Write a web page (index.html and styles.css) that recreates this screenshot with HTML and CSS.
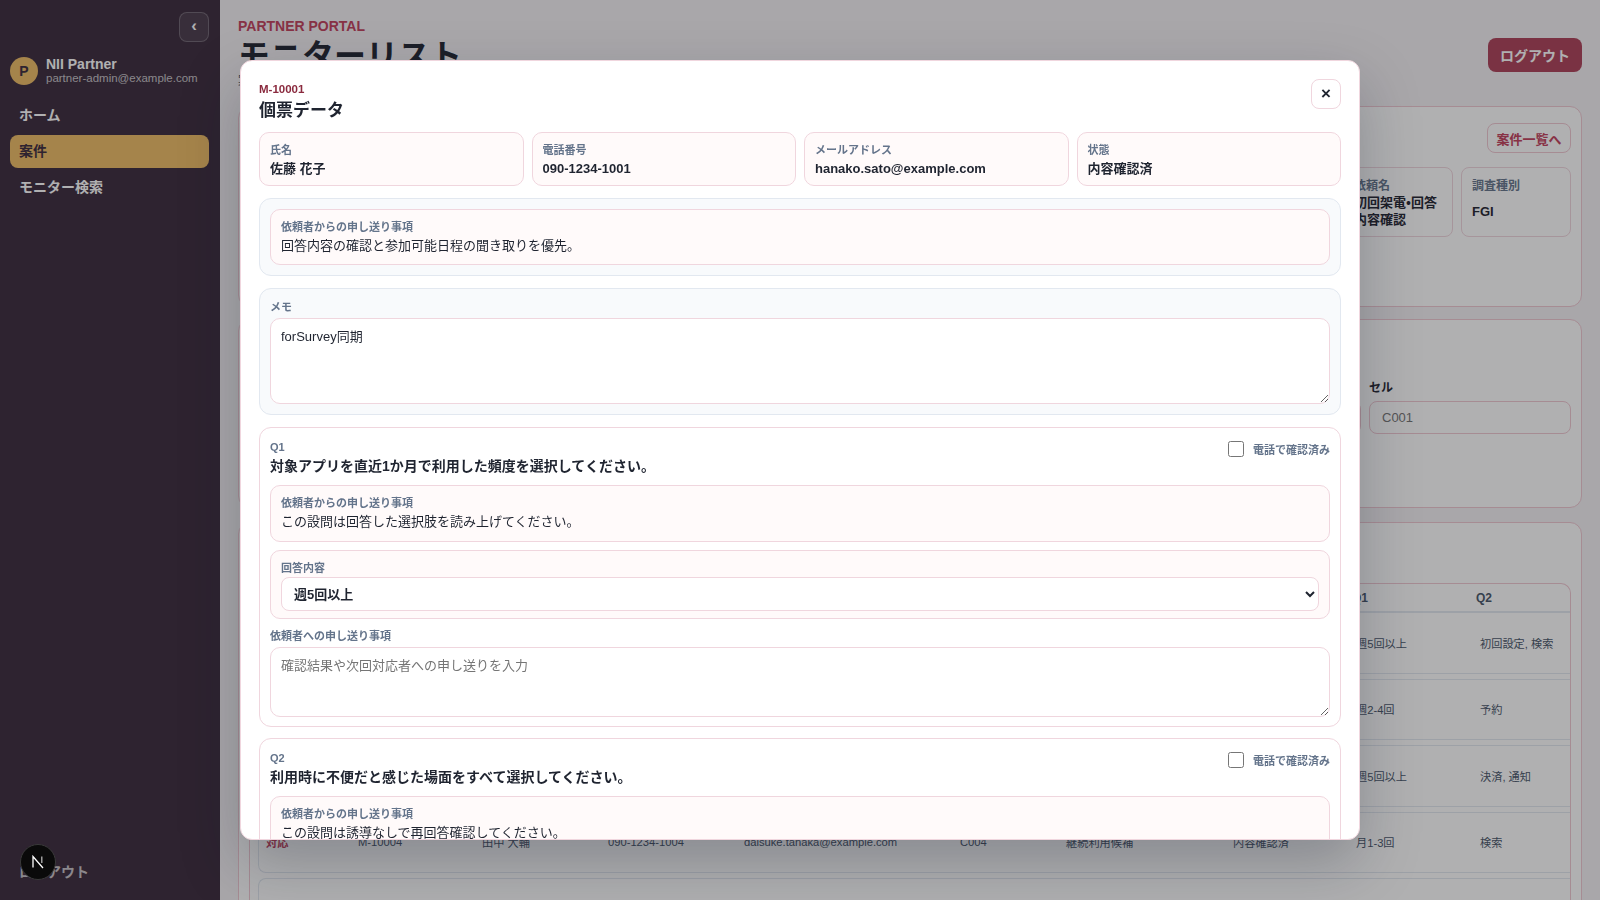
FILE: index.html
```html
<!DOCTYPE html>
<html lang="ja">
<head>
    <meta charset="UTF-8">
    <meta name="viewport" content="width=device-width, initial-scale=1.0">
    <title>モニターリスト</title>
    <link rel="stylesheet" href="styles.css">
</head>
<body>
    <aside class="sidebar">
        <button class="collapse" type="button">‹</button>
        <div class="user">
            <div class="avatar">P</div>
            <div>
                <div class="user-name">NII Partner</div>
                <div class="user-mail">partner-admin@example.com</div>
            </div>
        </div>
        <nav class="nav">
            <a class="nav-item">ホーム</a>
            <a class="nav-item active">案件</a>
            <a class="nav-item">モニター検索</a>
        </nav>
        <a class="nav-item sidebar-logout">ログアウト</a>
    </aside>

    <main class="main">
        <header class="page-head">
            <div class="page-title">
                <div class="eyebrow">PARTNER PORTAL</div>
                <h1>モニターリスト</h1>
                <p class="page-sub">案件に紐づくモニターを確認します。</p>
            </div>
            <button class="logout" type="button">ログアウト</button>
        </header>

        <section class="card case-card">
            <div class="card-head">
                <h2>案件情報</h2>
                <button class="ghost" type="button">案件一覧へ</button>
            </div>
            <div class="case-grid">
                <div class="case-cell"><span>案件ID</span><strong>P-2001</strong></div>
                <div class="case-cell"><span>案件名</span><strong>アプリ利用実態調査</strong></div>
                <div class="case-cell"><span>クライアント</span><strong>NII Partner</strong></div>
                <div class="case-cell"><span>依頼名</span><strong>初回架電・回答内容確認</strong></div>
                <div class="case-cell"><span>調査種別</span><strong>FGI</strong></div>
            </div>
        </section>

        <section class="card filter-card">
            <h2>絞り込み</h2>
            <div class="filter-grid">
                <label class="field">ID<input placeholder="M-10001"></label>
                <label class="field">氏名<input placeholder="佐藤 花子"></label>
                <label class="field">電話番号<input placeholder="090-1234-1001"></label>
                <label class="field">メール<input placeholder="hanako.sato@example.com"></label>
                <label class="field">状態<input placeholder="内容確認済"></label>
                <label class="field">セル<input placeholder="C001"></label>
            </div>
        </section>

        <section class="card list-card">
            <h2>モニター一覧</h2>
            <div class="table">
                <div class="table-row table-header">
                    <div>操作</div><div>ID</div><div>氏名</div><div>電話番号</div><div>メール</div><div>セル</div><div>属性</div><div>状態</div><div>Q1</div><div>Q2</div>
                </div>
                <div class="table-row">
                    <div class="act">対応</div><div>M-10001</div><div>佐藤 花子</div><div>090-1234-1001</div><div>hanako.sato@example.com</div><div>C001</div><div>継続利用候補</div><div>内容確認済</div><div>週5回以上</div><div>初回設定, 検索</div>
                </div>
                <div class="table-row">
                    <div class="act">対応</div><div>M-10002</div><div>鈴木 一郎</div><div>090-1234-1002</div><div>ichiro.suzuki@example.com</div><div>C002</div><div>新規利用</div><div>内容確認済</div><div>週2-4回</div><div>予約</div>
                </div>
                <div class="table-row">
                    <div class="act">対応</div><div>M-10003</div><div>高橋 美咲</div><div>090-1234-1003</div><div>misaki.takahashi@example.com</div><div>C003</div><div>継続利用候補</div><div>内容確認済</div><div>週5回以上</div><div>決済, 通知</div>
                </div>
                <div class="table-row">
                    <div class="act">対応</div><div>M-10004</div><div>田中 大輔</div><div>090-1234-1004</div><div>daisuke.tanaka@example.com</div><div>C004</div><div>継続利用候補</div><div>内容確認済</div><div>月1-3回</div><div>検索</div>
                </div>
                <div class="table-row"></div>
            </div>
        </section>
    </main>

    <div class="overlay">
        <div class="modal">
            <div class="modal-head">
                <div>
                    <div class="modal-id">M-10001</div>
                    <div class="modal-title">個票データ</div>
                </div>
                <button class="close" type="button">×</button>
            </div>

            <div class="info-grid">
                <div class="box"><div class="label">氏名</div><div class="value">佐藤 花子</div></div>
                <div class="box"><div class="label">電話番号</div><div class="value">090-1234-1001</div></div>
                <div class="box"><div class="label">メールアドレス</div><div class="value">hanako.sato@example.com</div></div>
                <div class="box"><div class="label">状態</div><div class="value">内容確認済</div></div>
            </div>

            <section class="panel">
                <div class="box note">
                    <div class="label">依頼者からの申し送り事項</div>
                    <div class="note-text">回答内容の確認と参加可能日程の聞き取りを優先。</div>
                </div>
            </section>

            <section class="panel memo">
                <label class="label" for="memo">メモ</label>
                <textarea id="memo" class="memo-input">forSurvey同期</textarea>
            </section>

            <section class="question">
                <div class="q-head">
                    <div>
                        <div class="label">Q1</div>
                        <div class="q-title">対象アプリを直近1か月で利用した頻度を選択してください。</div>
                    </div>
                    <label class="check"><input type="checkbox">電話で確認済み</label>
                </div>
                <div class="box note">
                    <div class="label">依頼者からの申し送り事項</div>
                    <div class="note-text">この設問は回答した選択肢を読み上げてください。</div>
                </div>
                <div class="box answer">
                    <label class="label">回答内容</label>
                    <select class="answer-select">
                        <option>週5回以上</option>
                        <option>週2-4回</option>
                        <option>月1-3回</option>
                    </select>
                </div>
                <label class="label handover-label">依頼者への申し送り事項</label>
                <textarea class="handover" placeholder="確認結果や次回対応者への申し送りを入力"></textarea>
            </section>

            <section class="question">
                <div class="q-head">
                    <div>
                        <div class="label">Q2</div>
                        <div class="q-title">利用時に不便だと感じた場面をすべて選択してください。</div>
                    </div>
                    <label class="check"><input type="checkbox">電話で確認済み</label>
                </div>
                <div class="box note">
                    <div class="label">依頼者からの申し送り事項</div>
                    <div class="note-text">この設問は誘導なしで再回答確認してください。</div>
                </div>
            </section>
        </div>
    </div>

    <div class="dev-badge">
        <svg width="14" height="14" viewBox="0 0 14 14" fill="none">
            <path d="M2 12.5V1.5L12 13" stroke="#fff" stroke-width="1.3"/>
            <path d="M10.8 1.5V8" stroke="#fff" stroke-width="1.3" opacity="0.7"/>
        </svg>
    </div>
</body>
</html>
```

FILE: styles.css
```css
* {
    box-sizing: border-box;
}

body {
    margin: 0;
    height: 900px;
    display: flex;
    overflow: hidden;
    background-color: #f4f1f4;
    color: #1f2430;
    font-family: "Liberation Sans", "DejaVu Sans", "Noto Sans CJK SC", sans-serif;
}

button, input, select, textarea {
    font-family: inherit;
}

/* sidebar */
.sidebar {
    width: 220px;
    height: 900px;
    flex-shrink: 0;
    display: flex;
    flex-direction: column;
    padding: 12px 11px 11px 10px;
    background-color: #3a2a3c;
    color: #fff;
}

.collapse {
    align-self: flex-end;
    width: 30px;
    height: 30px;
    padding: 0 0 3px;
    border: 1px solid rgba(255,255,255,0.22);
    border-radius: 8px;
    background-color: rgba(255,255,255,0.08);
    color: #fff;
    font-size: 17px;
    font-weight: bold;
}

.user {
    display: flex;
    align-items: center;
    gap: 8px;
    margin-top: 14px;
}

.avatar {
    display: flex;
    align-items: center;
    justify-content: center;
    width: 28px;
    height: 28px;
    border-radius: 50%;
    background-color: #eebc64;
    color: #3a2a3c;
    font-size: 14px;
    font-weight: bold;
}

.user-name {
    font-size: 14px;
    font-weight: bold;
    line-height: 16px;
}

.user-mail {
    font-size: 11.5px;
    line-height: 13px;
    color: rgba(255,255,255,0.72);
}

.nav {
    display: flex;
    flex-direction: column;
    gap: 3px;
    margin-top: 14px;
}

.nav-item {
    display: block;
    height: 33px;
    padding: 0 9px;
    border-radius: 8px;
    font-size: 14px;
    font-weight: bold;
    line-height: 33px;
    color: #fff;
}

.nav-item.active {
    background-color: #eebc64;
    color: #3a2a3c;
}

.sidebar-logout {
    margin-top: auto;
    color: rgba(255,255,255,0.72);
}

/* page behind the dialog */
.main {
    flex: 1;
    min-width: 0;
    padding: 18px 18px 0;
}

.page-head {
    display: flex;
    justify-content: space-between;
    align-items: center;
    height: 76px;
    margin-bottom: 12px;
}

.page-title {
    padding-bottom: 6px;
}

.eyebrow {
    font-size: 14px;
    line-height: 16px;
    font-weight: bold;
    color: #c2405c;
}

h1 {
    margin: 0;
    font-size: 32px;
    line-height: 44px;
}

.page-sub {
    margin: -4px 0 0;
    font-size: 12px;
    line-height: 14px;
    color: #475569;
}

.logout {
    width: 94px;
    height: 34px;
    margin-bottom: 2px;
    border: none;
    border-radius: 8px;
    background-color: #ad4058;
    color: #fff;
    font-size: 14px;
    font-weight: bold;
}

.card {
    margin-bottom: 12px;
    padding: 16px 10px 10px;
    border: 1px solid #f0c8d2;
    border-radius: 12px;
    background-color: #fff;
}

.card h2 {
    margin: 0;
    font-size: 16px;
    line-height: 20px;
}

.case-card {
    height: 201px;
}

.card-head {
    display: flex;
    justify-content: space-between;
    align-items: center;
    height: 30px;
}

.ghost {
    width: 84px;
    height: 30px;
    padding: 0;
    border: 1px solid #f0c8d2;
    border-radius: 8px;
    background-color: #fff;
    color: #c2405c;
    font-size: 13px;
    font-weight: bold;
}

.case-grid {
    display: grid;
    grid-template-columns: repeat(3, 1fr) 110px 110px;
    gap: 8px;
    margin-top: 14px;
}

.case-cell {
    height: 70px;
    padding: 8px 10px;
    border: 1px solid #f0d6de;
    border-radius: 8px;
    font-size: 13px;
    display: flex;
    flex-direction: column;
    justify-content: space-between;
}

.case-cell span {
    font-size: 12px;
    font-weight: bold;
    color: #64748b;
}

.case-cell strong {
    margin-bottom: auto;
    margin-top: auto;
    padding-top: 1px;
    line-height: 17px;
}

.filter-card {
    height: 189px;
    margin-bottom: 14px;
}

.filter-grid {
    display: grid;
    grid-template-columns: repeat(5, 1fr) 202px;
    gap: 8px;
    margin-top: 25px;
}

.field {
    display: flex;
    flex-direction: column;
    gap: 5px;
    font-size: 12px;
    line-height: 15px;
    font-weight: bold;
}

.field input {
    height: 33px;
    padding: 0 12px;
    border: 1px solid #f0c8d2;
    border-radius: 8px;
    background-color: #fff;
    font-size: 13px;
}

.table {
    margin-top: 24px;
    padding: 0 0 0 8px;
    border: 1px solid #f0c8d2;
    border-bottom: none;
    border-radius: 10px 10px 0 0;
    display: flex;
    flex-direction: column;
    gap: 5px;
}

.table-row {
    display: grid;
    grid-template-columns: 92px 124px 126px 136px 216px 106px 167px 123px 124px 1fr;
    align-items: center;
    flex-shrink: 0;
    height: 61.5px;
    padding-left: 7px;
    border: 1px solid #e2e8f0;
    border-right: none;
    border-radius: 8px 0 0 8px;
    font-size: 11.2px;
    color: #475569;
}

.table-header {
    height: 28px;
    margin: 0 0 -5px -8px;
    padding-left: 12px;
    border: none;
    border-bottom: 1px solid #e2e8f0;
    border-radius: 0;
    font-weight: bold;
    font-size: 12px;
}

.act {
    font-weight: bold;
    color: #c2405c;
}

/* dialog */
.overlay {
    position: fixed;
    inset: 0;
    display: flex;
    align-items: center;
    justify-content: center;
    background-color: rgba(24,24,27,0.34);
    backdrop-filter: blur(0.6px);
}

.modal {
    width: 1120px;
    height: 780px;
    padding: 18px;
    overflow: hidden;
    border: 1px solid #f0d6de;
    border-radius: 12px;
    background-color: #fff;
    box-shadow: 0 24px 60px rgba(15,23,42,0.25);
}

.modal-head {
    display: flex;
    justify-content: space-between;
    align-items: flex-start;
    height: 44px;
    margin-bottom: 9px;
}

.modal-id {
    margin-top: 2px;
    font-size: 11.5px;
    font-weight: bold;
    line-height: 17px;
    color: #8a2a3e;
}

.modal-title {
    font-size: 17px;
    font-weight: bold;
    line-height: 25px;
}

.close {
    width: 30px;
    height: 30px;
    padding: 0;
    border: 1px solid #f0d6de;
    border-radius: 8px;
    background-color: #fff;
    color: #1f2430;
    font-size: 17px;
    font-weight: bold;
}

.info-grid {
    display: grid;
    grid-template-columns: repeat(4, 1fr);
    gap: 8px;
    margin-bottom: 12px;
}

.box {
    padding: 10px 10px 9px;
    border: 1px solid #f0d6de;
    border-radius: 10px;
    background-color: #fffafa;
}

.info-grid .box {
    height: 54px;
}

.label {
    display: block;
    font-size: 11px;
    font-weight: bold;
    line-height: 15px;
    color: #64748b;
}

.value {
    margin-top: 1px;
    font-size: 13px;
    font-weight: bold;
    line-height: 19px;
}

.panel {
    margin-bottom: 12px;
    padding: 10px;
    border: 1px solid #e2e8f0;
    border-radius: 12px;
    background-color: #f8fafc;
}

.note {
    height: 56px;
}

.question .note {
    height: 57px;
}

.note-text {
    margin-top: 1px;
    font-size: 13px;
    line-height: 20px;
}

.memo {
    padding-top: 11px;
}

.memo .label {
    margin-bottom: 3px;
}

textarea {
    display: block;
    width: 100%;
    padding: 9px 10px;
    border: 1px solid #f0d6de;
    border-radius: 10px;
    background-color: #fff;
    color: #1f2430;
    font-size: 13px;
    line-height: 18px;
    outline: none;
    resize: vertical;
}

.memo-input {
    height: 86px;
}

.question {
    margin-bottom: 11px;
    padding: 10px 10px 9px;
    border: 1px solid #f0d6de;
    border-radius: 12px;
    background-color: #fff;
}

.q-head {
    display: flex;
    justify-content: space-between;
    align-items: flex-start;
    height: 47px;
    padding-top: 2px;
}

.q-title {
    margin-top: 1px;
    font-size: 14px;
    font-weight: bold;
    line-height: 21px;
}

.check {
    display: flex;
    align-items: center;
    gap: 9px;
    margin-top: 1px;
    font-size: 11px;
    font-weight: bold;
    color: #64748b;
}

.check input {
    width: 16px;
    height: 16px;
    margin: 0;
}

.answer {
    height: 69px;
    margin-top: 8px;
}

.answer-select {
    display: block;
    width: 100%;
    height: 34px;
    margin-top: 1px;
    padding: 0 8px;
    border: 1px solid #f0d6de;
    border-radius: 8px;
    background-color: #fff;
    color: #1f2430;
    font-size: 13px;
    font-weight: bold;
}

.handover-label {
    margin-top: 10px;
    margin-bottom: 3px;
}

.handover {
    height: 70px;
}

/* dev tools indicator */
.dev-badge {
    position: fixed;
    left: 20px;
    bottom: 20px;
    display: flex;
    align-items: center;
    justify-content: center;
    width: 36px;
    height: 36px;
    border: 1px solid #3a3a3a;
    border-radius: 50%;
    background-color: #0a0a0a;
}
```
